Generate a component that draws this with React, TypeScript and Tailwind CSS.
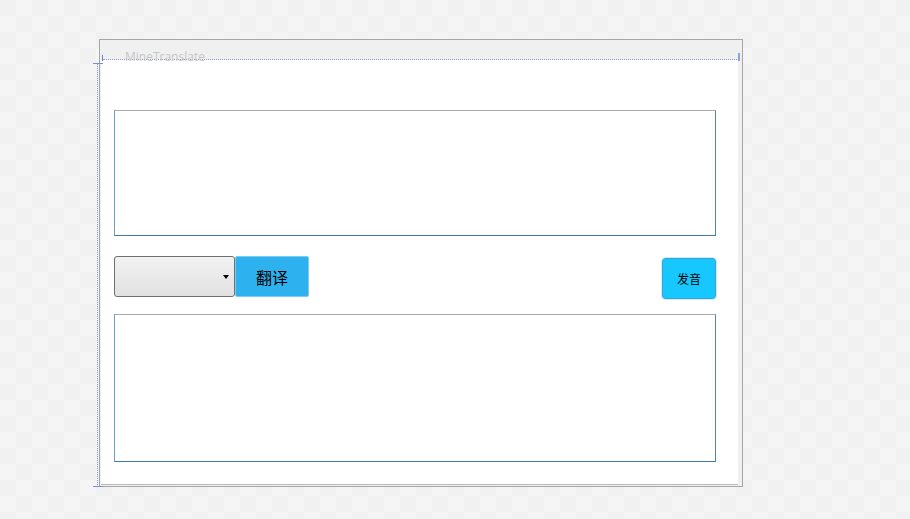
import React from "react";

// WPF designer preview of the MineTranslate window
const cjk = { fontFamily: '"Noto Sans CJK SC", "Noto Sans", sans-serif' };

const TextArea: React.FC<{ height: string }> = ({ height }) => (
  <div
    className={`w-[602px] ${height} bg-white border border-t-[#a9a9a9] border-l-[#6f9dc4] border-r-[#4d87b8] border-b-[#3f79aa]`}
  />
);

const App: React.FC = () => {
  return (
    <div className="relative w-[910px] h-[519px] overflow-hidden bg-[#f3f3f3] bg-[repeating-conic-gradient(#f5f5f5_0_25%,#f1f1f1_0_50%)] bg-[length:32px_32px] pt-[39px] pl-[99px]">
      {/* designer adornments */}
      <div className="absolute left-[97px] top-[63px] h-[424px] border-l border-dotted border-[#8a9bd0]" />
      <div className="absolute left-[93px] top-[486px] w-[10px] border-t border-[#7b8fd0]" />
      <div className="absolute left-[93px] top-[63px] w-[10px] border-t border-[#7b8fd0]" />

      <div className="w-[644px] h-[448px] border border-[#a6a6a6] bg-[#f0f0f0] flex flex-col">
        <div className="relative h-[20px] flex items-end pl-[22px] border-b border-dotted border-[#8f9ccc] mx-[3px]">
          <span
            className="text-[12px] leading-[14px] text-[#c6c6c6] -mb-[5px]"
            style={{ fontFamily: '"Open Sans", "Liberation Sans", sans-serif' }}
          >
            MineTranslate
          </span>
          <div className="absolute -left-[1px] top-[15px] h-[6px] border-l border-[#6b7fc6]" />
          <div className="absolute -right-[1px] top-[13px] h-[8px] border-l-2 border-[#8fa5d8]" />
        </div>
        <div className="flex">
          <div className="ml-[1px] w-[637px] h-[425px] bg-white border-b border-[#b8b8b8] pl-[13px] pt-[50px] flex flex-col">
            <TextArea height="h-[126px]" />
            <div className="mt-[20px] w-[602px] flex items-start">
              <div className="w-[121px] h-[41px] rounded-[3px] border border-[#707070] bg-gradient-to-b from-[#f2f2f2] to-[#e1e1e1] flex items-center justify-end pr-[5px]">
                <div className="w-0 h-0 border-l-[3.5px] border-r-[3.5px] border-t-[4px] border-l-transparent border-r-transparent border-t-black" />
              </div>
              <button
                className="w-[74px] h-[41px] bg-[#2db1ef] border border-[#7ccbf2] rounded-[2px] text-[16px] text-black flex items-center justify-center"
                style={cjk}
              >
                翻译
              </button>
              <div className="flex-1" />
              <button
                className="mt-[2px] w-[54px] h-[41px] rounded-[3px] bg-[#16c8ff] border border-[#3e9fd6] outline outline-1 outline-[#cdeefe] text-[12px] text-black flex items-center justify-center"
                style={cjk}
              >
                发音
              </button>
            </div>
            <div className="mt-[15px]">
              <TextArea height="h-[148px]" />
            </div>
          </div>
        </div>
      </div>
    </div>
  );
};

export default App;
